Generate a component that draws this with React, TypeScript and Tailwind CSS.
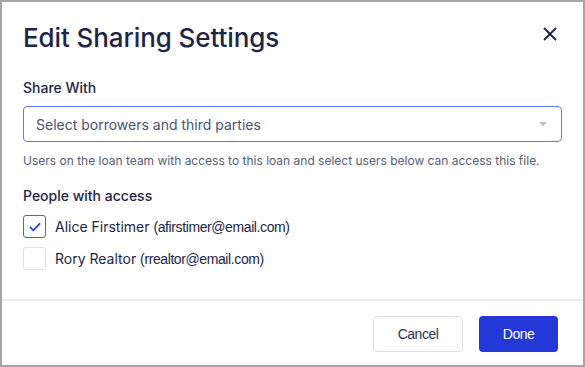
import { useState } from "react";

const PEOPLE = [
  { name: "Alice Firstimer", email: "afirstimer@email.com", checked: true },
  { name: "Rory Realtor", email: "rrealtor@email.com", checked: false },
];

export default function App() {
  const [people, setPeople] = useState(PEOPLE);

  const toggle = (email: string) =>
    setPeople((list) =>
      list.map((p) => (p.email === email ? { ...p, checked: !p.checked } : p)),
    );

  return (
    <div className="flex h-[367px] w-[585px] flex-col border-2 border-[#a6a6a6] bg-white font-['Inter',sans-serif] text-[#1e2548]">
      <div className="flex flex-1 flex-col px-[21px]">
        <div className="flex items-start justify-between pt-[20px]">
          <h1 className="text-[26px] font-medium leading-[32px] tracking-[-0.1px]">
            Edit Sharing Settings
          </h1>
          <button aria-label="Close" className="mt-[5px] mr-[5px] text-[#1e2548]">
            <svg width="14" height="14" viewBox="0 0 14 14" fill="none">
              <path d="M1 1L13 13M13 1L1 13" stroke="currentColor" strokeWidth="1.9" />
            </svg>
          </button>
        </div>

        <label className="mt-[24px] text-[14px] font-medium leading-[20px]">Share With</label>

        <button className="mt-[8px] flex h-[36px] w-full items-center justify-between rounded-[4px] border border-[#6479ee] px-[12px] text-left text-[14px] text-[#4a5270]">
          <span>Select borrowers and third parties</span>
          <span className="mr-[2px] h-0 w-0 border-x-[4px] border-t-[4px] border-x-transparent border-t-[#b9bdc8]" />
        </button>

        <p className="mt-[10px] text-[12px] leading-[18px] text-[#565d78]">
          Users on the loan team with access to this loan and select users below can access this file.
        </p>

        <h2 className="mt-[16px] text-[14px] font-medium leading-[20px]">People with access</h2>

        <ul className="mt-[9px] flex flex-col gap-[9px]">
          {people.map((p) => (
            <li key={p.email} className="h-[23px]">
              <label className="flex h-[23px] cursor-pointer items-center gap-[9px]">
                <span
                  onClick={() => toggle(p.email)}
                  className={
                    p.checked
                      ? "flex h-[23px] w-[23px] items-center justify-center rounded-[3px] border border-[#4c5fe0] text-[#2438d9]"
                      : "flex h-[23px] w-[23px] items-center justify-center rounded-[3px] border border-[#dfe1e8]"
                  }
                >
                  {p.checked && (
                    <svg width="12" height="10" viewBox="0 0 12 10" fill="none">
                      <path d="M1 5.2L4.4 8.4L11 1.4" stroke="currentColor" strokeWidth="1.6" />
                    </svg>
                  )}
                </span>
                <span className="text-[14px] leading-[20px]">
                  {p.name}{" "}
                  <span className="font-['Liberation_Sans',sans-serif] text-[14px] tracking-[-0.4px]">
                    ({p.email})
                  </span>
                </span>
              </label>
            </li>
          ))}
        </ul>
      </div>

      <div className="flex justify-end gap-[16px] border-t-2 border-[#ebebf1] px-[25px] pt-[15px] pb-[13px] font-['Liberation_Sans',sans-serif] text-[14px] tracking-[-0.5px]">
        <button className="h-[36px] w-[90px] rounded-[4px] border border-[#dcdfe6] text-[#2a3352]">
          Cancel
        </button>
        <button className="h-[36px] w-[79px] rounded-[4px] bg-[#2438d9] text-white">Done</button>
      </div>
    </div>
  );
}
